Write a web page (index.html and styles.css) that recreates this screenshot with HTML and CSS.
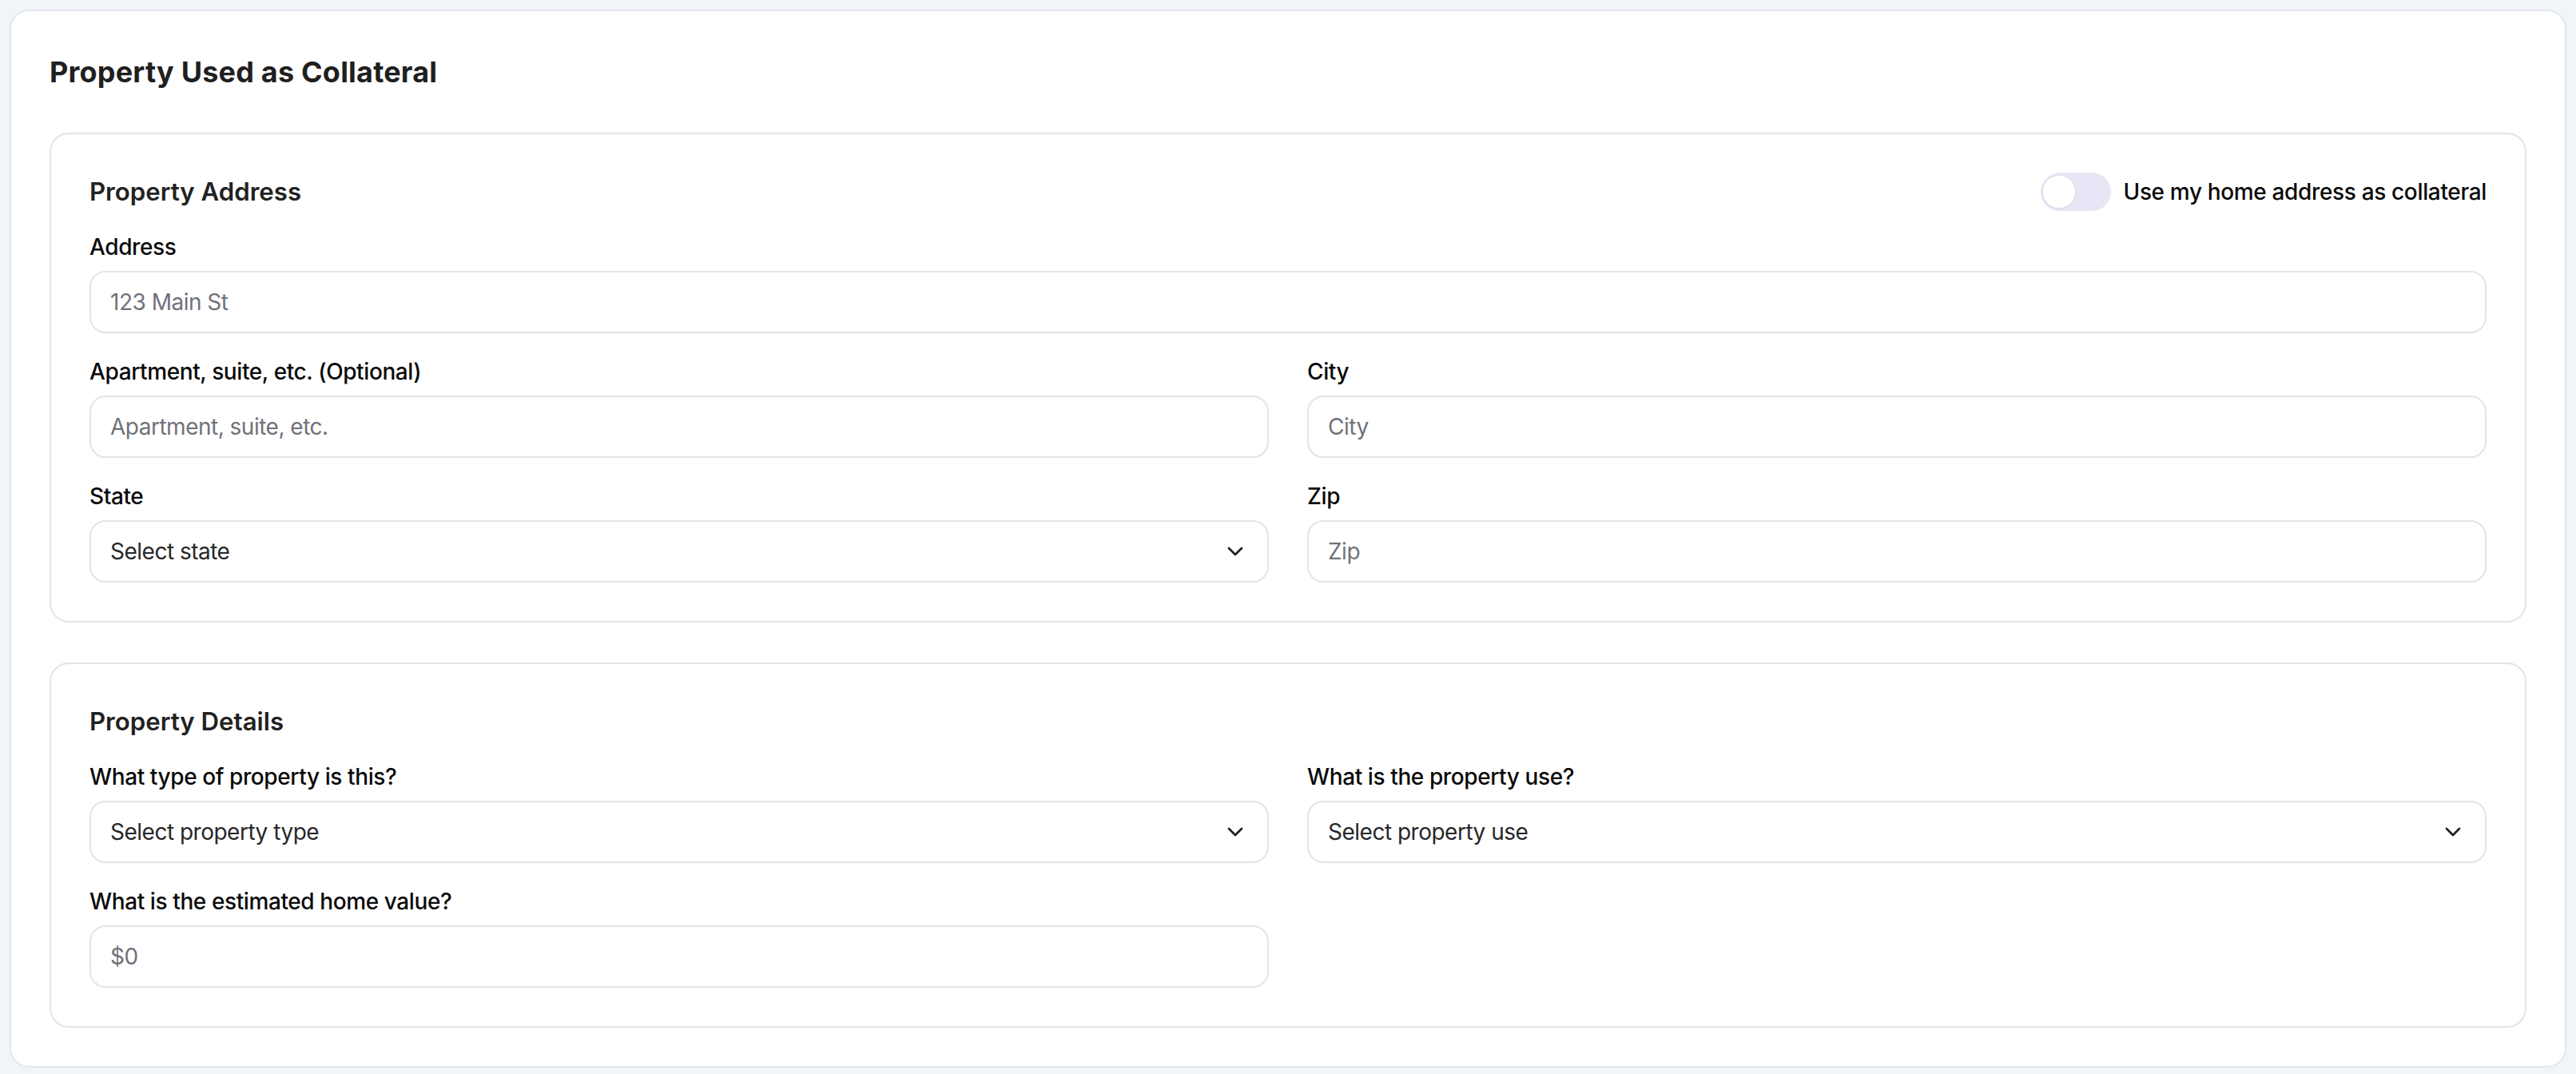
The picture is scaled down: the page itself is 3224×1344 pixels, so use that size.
FILE: index.html
```html
<!DOCTYPE html>
<html lang="en">
<head>
<meta charset="utf-8">
<title>Property Used as Collateral</title>
<link rel="stylesheet" href="styles.css">
</head>
<body>
<main class="card">
  <h1 class="title">Property Used as Collateral</h1>

  <section class="panel">
    <div class="panel-head">
      <h2 class="panel-title">Property Address</h2>
      <div class="switch-row">
        <span class="switch"><span class="knob"></span></span>
        <span class="switch-label">Use my home address as collateral</span>
      </div>
    </div>
    <div class="grid">
      <div class="field span-2">
        <div class="label">Address</div>
        <div class="control"><span class="placeholder">123 Main St</span></div>
      </div>
      <div class="field">
        <div class="label">Apartment, suite, etc. (Optional)</div>
        <div class="control"><span class="placeholder">Apartment, suite, etc.</span></div>
      </div>
      <div class="field">
        <div class="label">City</div>
        <div class="control"><span class="placeholder">City</span></div>
      </div>
      <div class="field">
        <div class="label">State</div>
        <div class="control select"><span class="value">Select state</span>
          <svg class="chev" viewBox="0 0 24 24" fill="none" stroke="currentColor" stroke-width="2" stroke-linecap="round" stroke-linejoin="round"><path d="m6 9 6 6 6-6"/></svg>
        </div>
      </div>
      <div class="field">
        <div class="label">Zip</div>
        <div class="control"><span class="placeholder">Zip</span></div>
      </div>
    </div>
  </section>

  <section class="panel">
    <div class="panel-head">
      <h2 class="panel-title">Property Details</h2>
    </div>
    <div class="grid">
      <div class="field">
        <div class="label">What type of property is this?</div>
        <div class="control select"><span class="value">Select property type</span>
          <svg class="chev" viewBox="0 0 24 24" fill="none" stroke="currentColor" stroke-width="2" stroke-linecap="round" stroke-linejoin="round"><path d="m6 9 6 6 6-6"/></svg>
        </div>
      </div>
      <div class="field">
        <div class="label">What is the property use?</div>
        <div class="control select"><span class="value">Select property use</span>
          <svg class="chev" viewBox="0 0 24 24" fill="none" stroke="currentColor" stroke-width="2" stroke-linecap="round" stroke-linejoin="round"><path d="m6 9 6 6 6-6"/></svg>
        </div>
      </div>
      <div class="field">
        <div class="label">What is the estimated home value?</div>
        <div class="control"><span class="placeholder">$0</span></div>
      </div>
    </div>
  </section>
</main>
</body>
</html>
```

FILE: styles.css
```css
* { box-sizing: border-box; }

html, body {
  margin: 0;
  padding: 0;
}

body {
  background: #f1f4f9;
  padding: 12px;
  font-family: Inter, "Noto Sans", "Liberation Sans", sans-serif;
  color: #0a0a0a;
}

.card {
  background: #ffffff;
  border: 2px solid #e3e6eb;
  border-radius: 24px;
  padding: 48px;
}

.title {
  margin: 0 0 48px;
  font-size: 36px;
  line-height: 56px;
  font-weight: 700;
  color: #1f1f1f;
  letter-spacing: 0.2px;
}

.panel {
  border: 2px solid #e4e4e7;
  border-radius: 24px;
  padding: 48px;
}

.panel + .panel {
  margin-top: 50px;
}

.panel-head {
  display: flex;
  align-items: center;
  justify-content: space-between;
  height: 48px;
  margin-bottom: 25px;
}

.panel-title {
  margin: 0;
  font-size: 31.2px;
  line-height: 48px;
  font-weight: 600;
  color: #222222;
}

.switch-row {
  display: flex;
  align-items: center;
  gap: 16px;
}

.switch {
  position: relative;
  width: 88px;
  height: 48px;
  border-radius: 24px;
  background: #e8e6f6;
  display: block;
}

.knob {
  position: absolute;
  left: 2px;
  top: 3px;
  width: 42px;
  height: 42px;
  border-radius: 50%;
  background: #ffffff;
  border: 1px solid #e6e4f2;
  box-shadow: 0 1px 2px rgba(0, 0, 0, 0.06);
}

.switch-label {
  font-size: 28px;
  line-height: 40px;
  font-weight: 500;
  letter-spacing: -0.35px;
  color: #0a0a0a;
}

.grid {
  display: grid;
  grid-template-columns: 1fr 1fr;
  column-gap: 48px;
  row-gap: 28px;
}

.span-2 {
  grid-column: 1 / span 2;
}

.field {
  display: flex;
  flex-direction: column;
  gap: 10px;
}

.label {
  font-size: 28px;
  line-height: 40px;
  font-weight: 500;
  letter-spacing: -0.4px;
  color: #0a0a0a;
}

.control {
  height: 78px;
  border: 2px solid #e4e4e7;
  border-radius: 20px;
  padding: 0 24px 0 24px;
  display: flex;
  align-items: center;
  font-size: 28px;
  letter-spacing: -0.5px;
  background: #ffffff;
}

.placeholder {
  color: #71717a;
}

.select {
  justify-content: space-between;
}

.value {
  color: #27272a;
}

.chev {
  width: 32px;
  height: 32px;
  color: #1f1f1f;
  flex: none;
}
```
